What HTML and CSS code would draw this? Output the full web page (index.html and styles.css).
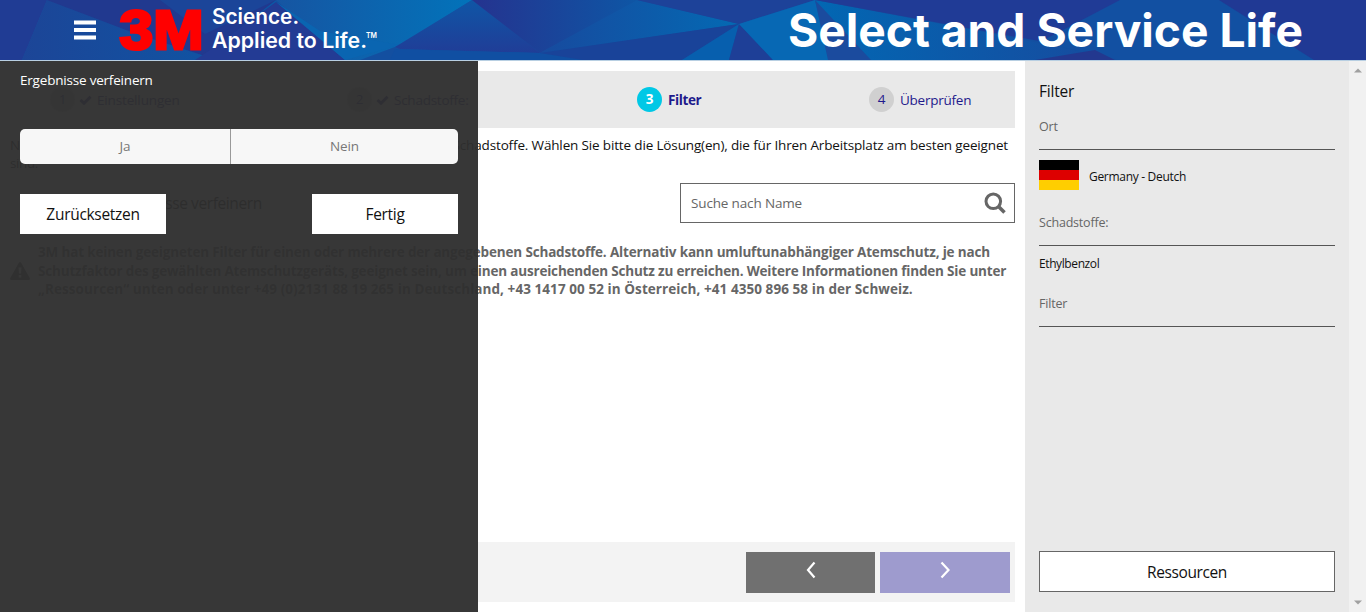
FILE: index.html
```html
<!DOCTYPE html>
<html lang="de">
<head>
<meta charset="utf-8">
<title>Select and Service Life</title>
<link rel="stylesheet" href="styles.css">
</head>
<body>
<header class="header">
<svg class="banner" width="1366" height="60" viewBox="0 0 1366 60">
  <defs>
    <linearGradient id="ga"><stop offset="0" stop-color="#1c4597"/><stop offset="1" stop-color="#0c58a6"/></linearGradient>
    <linearGradient id="gb"><stop offset="0" stop-color="#1655a2"/><stop offset="1" stop-color="#0273ba"/></linearGradient>
    <linearGradient id="gc" x1="0" y1="0" x2="0" y2="1"><stop offset="0" stop-color="#0f56a6"/><stop offset="1" stop-color="#203d97"/></linearGradient>
    <linearGradient id="gd"><stop offset="0" stop-color="#25338f"/><stop offset="1" stop-color="#0e56a5"/></linearGradient>
    <linearGradient id="ge"><stop offset="0" stop-color="#174a9e"/><stop offset="1" stop-color="#0469b3"/></linearGradient>
    <linearGradient id="gf"><stop offset="0" stop-color="#0267b3"/><stop offset="1" stop-color="#164c9f"/></linearGradient>
  </defs>
  <rect width="1366" height="60" fill="#134fa0"/>
  <polygon points="0,0 47,0 22,60 0,60" fill="#203c94"/>
  <polygon points="47,0 276,0 276,2 240,33 210,60 22,60" fill="url(#ga)"/>
  <polygon points="47,0 276,0 205,56 134,33" fill="#21398f"/>
  <polygon points="160,0 276,0 205,34" fill="#1b4599"/>
  <polygon points="276,0 472,0 400,45 360,60 345,60" fill="url(#gb)"/>
  <polygon points="276,2 210,50 195,60 345,60" fill="#233b94"/>
  <polygon points="276,2 320,31 400,45 345,60" fill="#0a65b1"/>
  <polygon points="472,0 540,53 400,49 395,47" fill="url(#gc)"/>
  <polygon points="395,49 540,53 583,60 390,60" fill="#104fa2"/>
  <polygon points="472,0 637,0 540,53" fill="url(#gd)"/>
  <polygon points="637,0 739,24 540,53" fill="url(#ge)"/>
  <polygon points="540,53 739,24 682,60 583,60" fill="#194399"/>
  <polygon points="739,24 729,60 682,60" fill="#075fae"/>
  <polygon points="637,0 815,0 739,24" fill="#1d4299"/>
  <polygon points="739,24 729,60 773,60" fill="#1e3f97"/>
  <polygon points="815,0 739,24 773,60 830,60" fill="#0768b4"/>
  <polygon points="815,0 828,60 1040,60 1095,55 1000,35" fill="url(#gf)"/>
  <polygon points="815,0 828,60 871,60" fill="#1b4b9e"/>
  <polygon points="815,0 1219,0 1120,30 1050,43 940,23" fill="#203b96"/>
  <polygon points="1120,0 1219,0 1314,60 1120,60 1040,42" fill="#1250a2"/>
  <polygon points="1095,50 1115,60 1035,60" fill="#23388f"/>
  <polygon points="1219,0 1366,0 1366,60 1314,60" fill="#203994"/>
  <g fill="#fff"><rect x="74" y="20.5" width="22" height="4"/><rect x="74" y="28" width="22" height="4"/><rect x="74" y="35.5" width="22" height="4"/></g>
  <text class="logo" x="119.500" y="48.500" textLength="84" lengthAdjust="spacingAndGlyphs">3M</text>
  <text class="tagline" x="212" y="24" textLength="87" lengthAdjust="spacingAndGlyphs">Science.</text>
  <text class="tagline" x="212" y="48" textLength="155" lengthAdjust="spacingAndGlyphs">Applied to Life.</text>
  <text class="tm" x="366" y="38" textLength="11" lengthAdjust="spacingAndGlyphs">TM</text>
  <text class="product" x="788" y="47" textLength="515" lengthAdjust="spacingAndGlyphs">Select and Service Life</text>
</svg>
</header>
<div class="page">
<main class="content">
  <nav class="steps">
    <div class="step"><span class="num">1</span><svg class="check" width="13" height="10" viewBox="0 0 13 10"><path d="M1.5 5 5 8.3 11.5 1.7" fill="none" stroke="#1f1a8c" stroke-width="2.7"/></svg><span class="label-a">Einstellungen</span></div>
    <div class="step"><span class="num">2</span><svg class="check" width="13" height="10" viewBox="0 0 13 10"><path d="M1.5 5 5 8.3 11.5 1.7" fill="none" stroke="#1f1a8c" stroke-width="2.7"/></svg><span class="label-b">Schadstoffe:</span></div>
    <div class="step active"><span class="num">3</span><span class="label-c">Filter</span></div>
    <div class="step"><span class="num">4</span><span class="label-d">Überprüfen</span></div>
  </nav>
  <div class="intro"><div class="intro-line"><span>N</span><span>Schadstoffe. Wählen Sie bitte die Lösung(en), die für Ihren Arbeitsplatz am besten geeignet</span></div><div>sind.</div></div>
  <div class="tools">
    <div class="refine">Ergebnisse verfeinern</div>
    <div class="search"><span>Suche nach Name</span><svg width="22" height="22" viewBox="0 0 22 22"><circle cx="9.3" cy="9.3" r="7.3" fill="none" stroke="#666" stroke-width="3"/><path d="m14.5 14.5 6 6" stroke="#666" stroke-width="3.6"/></svg></div>
  </div>
  <div class="warning">
    <svg width="20" height="18" viewBox="0 0 20 18"><path d="M10 0Q10.8 0 11.3 .9L19.7 16Q20.4 18 18.6 18H1.4Q-.4 18 .3 16L8.7 .9Q9.2 0 10 0Z" fill="#555"/><path d="M8.6 5.5h2.8l-.4 6H9zM8.7 13h2.6v2.5H8.7z" fill="#fff"/></svg>
    <div class="warning-text"><div class="w1">3M hat keinen geeigneten Filter für einen oder mehrere der angegebenen Schadstoffe. Alternativ kann umluftunabhängiger Atemschutz, je nach</div><div class="w2">Schutzfaktor des gewählten Atemschutzgeräts, geeignet sein, um einen ausreichenden Schutz zu erreichen. Weitere Informationen finden Sie unter</div><div class="w3">„Ressourcen“ unten oder unter +49 (0)2131 88 19 265 in Deutschland, +43 1417 00 52 in Österreich, +41 4350 896 58 in der Schweiz.</div></div>
  </div>
  <footer class="pager">
    <div class="prev"><svg width="10" height="18" viewBox="0 0 10 18"><path d="M8.5 1.5 2 9l6.500 7.500" fill="none" stroke="#fff" stroke-width="2.200"/></svg></div>
    <div class="next"><svg width="10" height="18" viewBox="0 0 10 18"><path d="M1.500 1.500 8.500 9l-7 7.500" fill="none" stroke="#fff" stroke-width="2.200"/></svg></div>
  </footer>
</main>
<aside class="sidebar">
  <h2>Filter</h2>
  <div class="group ort">Ort</div>
  <div class="country"><div class="flag"><i></i><i></i><i></i></div><span>Germany - Deutch</span></div>
  <div class="group pollutants">Schadstoffe:</div>
  <div class="substance">Ethylbenzol</div>
  <div class="group filter">Filter</div>
  <div class="resources">Ressourcen</div>
</aside>
<div class="scrollbar"><svg width="8" height="5" viewBox="0 0 8 5"><path d="M0 4.500 4 .5 8 4.500z" fill="#a0a0a0"/></svg><svg width="8" height="5" viewBox="0 0 8 5"><path d="M0 .5h8L4 4.500z" fill="#a0a0a0"/></svg></div>
</div>
<section class="overlay">
  <div class="overlay-title">Ergebnisse verfeinern</div>
  <div class="toggle"><span>Ja</span><span>Nein</span></div>
  <div class="actions"><div class="reset">Zurücksetzen</div><div class="done">Fertig</div></div>
</section>
</body>
</html>
```
FILE: styles.css
```css
* { box-sizing: border-box; }
body { margin: 0; height: 612px; overflow: hidden; background: #fff; color: #111; font: 13.5px/18px "Open Sans", "Noto Sans", sans-serif; letter-spacing: -.4px; white-space: nowrap; }
.header { height: 61px; border-bottom: 1px solid #b8cfe2; }
.banner { display: block; letter-spacing: 0; }
.logo { font: bold 56px "Liberation Sans", sans-serif; fill: #f00; stroke: #f00; stroke-width: 3px; }
.tagline { font: 600 21px Inter, sans-serif; fill: #fff; }
.tm { font: 600 8px Inter, sans-serif; fill: #fff; }
.product { font: 700 46px Inter, sans-serif; fill: #fff; }
.page { display: flex; height: 551px; }
.content { display: flex; flex-direction: column; width: 1025px; padding: 10px; }
.steps { display: grid; grid-template-columns: 297px 290px 232px 1fr; align-items: center; height: 57px; padding-left: 40px; background: #e9e9e9; color: #1f1a8c; }
.step { display: flex; align-items: center; }
.num { width: 25px; height: 25px; margin-right: 6px; border-radius: 50%; background: #d0d0d0; text-align: center; line-height: 25px; }
.check { margin: 0 5px 0 -2px; }
.label-a { letter-spacing: -.15px; }
.label-b, .label-d { letter-spacing: -.25px; }
.active { font-weight: 700; }
.active .num { background: #00c8e6; color: #fff; }
.intro { margin-top: 8px; height: 46px; }
.intro-line { display: flex; justify-content: space-between; padding-right: 7px; letter-spacing: -.15px; }
.tools { display: flex; justify-content: space-between; margin-top: 1px; height: 40px; }
.refine { width: 336px; padding-left: 103px; background: #eee; line-height: 40px; font-size: 15.5px; }
.search { display: flex; align-items: center; justify-content: space-between; width: 335px; padding: 0 8px 0 10px; border: 1px solid #666; color: #666; letter-spacing: -.15px; }
.search span { letter-spacing: -.15px; }
.warning { display: flex; align-items: center; gap: 8px; margin-top: 20px; height: 56px; color: #666; font-weight: 700; line-height: 18.5px; }
.w1 { letter-spacing: -.165px; }
.w2 { letter-spacing: -.185px; }
.w3 { letter-spacing: .07px; }
.pager { display: flex; justify-content: flex-end; gap: 5px; margin-top: auto; padding: 10px 5px 0 0; height: 60px; background: #f3f3f3; }
.prev, .next { display: flex; justify-content: center; width: 130px; height: 41px; padding-top: 9px; background: #9e9bce; }
.prev { width: 129px; background: #707070; }
.sidebar { display: flex; flex-direction: column; width: 324px; padding: 20px 14px; background: #e9e9e9; }
h2 { margin: 0; font-size: 15.5px; line-height: 21px; font-weight: 400; letter-spacing: -.2px; }
.group { border-bottom: 1px solid #555; color: #666; font-size: 12.5px; letter-spacing: -.2px; }
.ort { margin-top: 16px; height: 32px; }
.country { display: flex; align-items: center; gap: 10px; margin-top: 10px; font-size: 12px; letter-spacing: -.3px; }
.flag { display: grid; width: 40px; height: 30px; }
.flag i { background: #000; }
.flag i:nth-child(2) { background: #d00; }
.flag i:nth-child(3) { background: #ffce00; }
.country span { padding-top: 3px; }
.pollutants { margin-top: 24px; height: 32px; }
.substance { margin-top: 9px; height: 18px; font-size: 12px; }
.filter { margin-top: 22px; height: 32px; }
.resources { margin-top: auto; height: 41px; border: 1px solid #666; background: #fff; text-align: center; line-height: 40px; font-size: 15.5px; }
.scrollbar { display: flex; flex-direction: column; justify-content: space-between; align-items: center; width: 17px; padding: 7px 0; background: #f1f1f1; }
.overlay { position: absolute; left: 0; top: 61px; width: 478px; height: 551px; padding: 10px 20px; background: rgba(47, 47, 47, .96); }
.overlay-title { color: #fff; letter-spacing: -.2px; }
.toggle { display: grid; grid-template-columns: 211px 227px; height: 35px; margin-top: 40px; overflow: hidden; border-radius: 5px; background: #f7f7f7; color: #777; text-align: center; line-height: 35px; letter-spacing: -.15px; }
.toggle span:first-child { border-right: 1px solid #999; }
.actions { display: flex; justify-content: space-between; margin-top: 30px; font-size: 15.5px; line-height: 41px; text-align: center; letter-spacing: -.3px; }
.reset, .done { width: 146px; height: 40px; background: #fff; }
```
